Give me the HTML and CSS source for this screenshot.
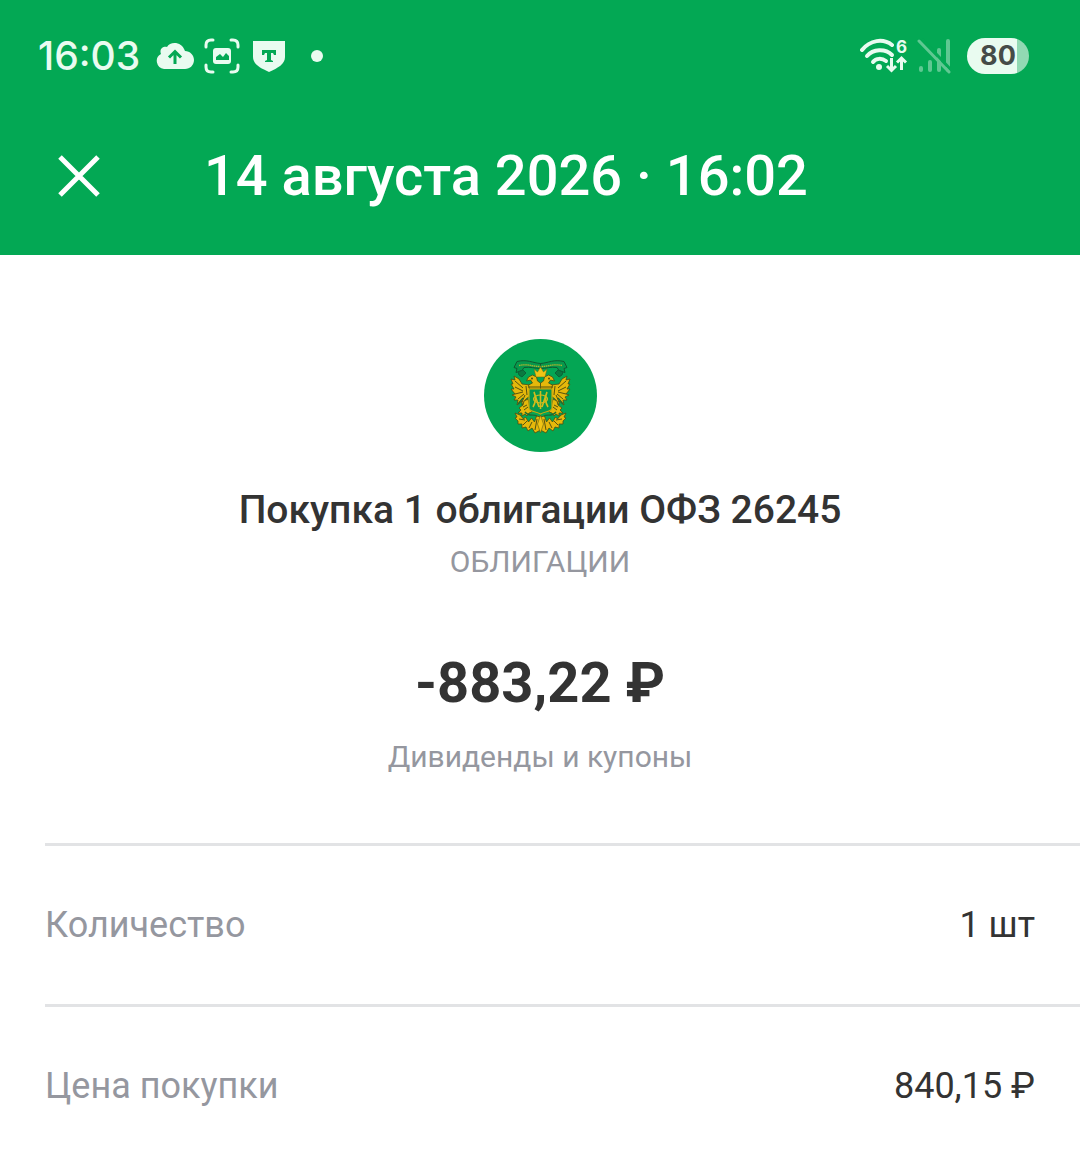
FILE: index.html
```html
<!DOCTYPE html>
<html lang="ru">
<head>
  <meta charset="UTF-8" />
  <meta name="viewport" content="width=device-width, initial-scale=1.0"/>
  <title>Покупка 1 облигации ОФЗ 26245</title>
  <link rel="stylesheet" href="styles.css">
</head>
<body>

  <header class="header">
    <!-- Status bar -->
    <div class="status-bar">
      <div class="status-left">
        <span class="clock">16:03</span>
        <svg class="icon-cloud" width="40" height="28" viewBox="0 0 40 28" aria-hidden="true">
          <path fill="#e9fbf0" d="M9 27a8 8 0 0 1-3-15C4 7 8 4 12 5c3-6 15-6 18 4 5 0 9 4 9 9s-4 9-9 9z"/>
          <path fill="none" stroke="#03a854" stroke-width="3" d="M20 22V10M14 15.500l6-6 6 6"/>
        </svg>
        <svg class="icon-capture" width="36" height="36" viewBox="0 0 36 36" aria-hidden="true">
          <path fill="none" stroke="#e9fbf0" stroke-width="3" stroke-linecap="round" d="M2 9V7q0-5 5-5h2M27 2h2q5 0 5 5v2M34 27v2q0 5-5 5h-2M9 34H7q-5 0-5-5v-2"/>
          <rect x="9" y="10" width="18" height="16" rx="3" fill="#e9fbf0"/>
          <path fill="#03a854" d="M12 22v-3l4-3 3 3 3-4 3 3v4z"/>
        </svg>
        <svg class="icon-shield" width="32" height="32" viewBox="0 0 32 32" aria-hidden="true">
          <path fill="#e9fbf0" d="M0 1h32v16c0 7-7 11-16 15C7 28 0 24 0 17z"/>
          <path fill="#03a854" d="M9 10h14v5h-2l-1-2h-2v7l2 1v1h-8v-1l2-1v-7h-2l-1 2H9z"/>
        </svg>
        <span class="dot"></span>
      </div>
      <div class="status-right">
        <svg width="50" height="36" viewBox="0 0 50 36" aria-hidden="true">
          <g fill="none" stroke="#e9fbf0" stroke-width="4" stroke-linecap="round">
            <path d="M3 12C11 2 24 0 33 7"/>
            <path d="M8 18c6-7 18-8 25-1"/>
            <path d="M14 24c3-4 9-4 13-1"/>
          </g>
          <circle cx="20" cy="29" r="3" fill="#e9fbf0"/>
          <path fill="none" stroke="#e9fbf0" stroke-width="3" d="M32.500 20v12M28 28l4.500 4.500L37 28M42.500 32V20M38 24.500l4.500-4.500 4.500 4.500"/>
          <text class="wifi-label" x="37" y="15">6</text>
        </svg>
        <svg class="icon-signal" width="34" height="36" viewBox="0 0 34 36" aria-hidden="true">
          <path fill="none" stroke="#5fc892" stroke-width="4" stroke-linecap="round" d="M4 30v2M13 24v8M22 12v20M31 3v29"/>
          <path fill="none" stroke="#03a854" stroke-width="3" d="M5 1l29 31"/>
          <path fill="none" stroke="#5fc892" stroke-width="3" stroke-linecap="round" d="M2 3l30 31"/>
        </svg>
        <span class="battery">80</span>
      </div>
    </div>

    <!-- Title bar -->
    <div class="title-bar">
      <button class="close" type="button" aria-label="Закрыть">
        <svg width="42" height="42" viewBox="0 0 42 42" aria-hidden="true">
          <path fill="none" stroke="#fff" stroke-width="5" d="M2 2l38 38M40 2L2 40"/>
        </svg>
      </button>
      <h1 class="date">14 августа 2026 · 16:02</h1>
    </div>
  </header>

  <main>
    <section class="summary">
      <svg class="emblem" width="113" height="113" viewBox="0 0 113 113" aria-hidden="true">
        <defs>
          <g id="half">
            <!-- ribbon -->
            <path fill="#07984c" stroke="#10582f" stroke-width="1" d="M56.500 24.500C49 24 43 20 33 22.500l-3 6 3 1-1 4 6-2 2-3c6-1 11 1 16.500 1z"/>
            <path fill="#0a7a40" stroke="#0b6337" stroke-width="1" d="M34 33l5-2 3 3-4 4-3-2z"/>
            <path fill="none" stroke="#b9b52c" stroke-width="1.300" stroke-dasharray="1.500 .6" d="M35 26.500c8-2 13 1 21.500 1"/>
            <g fill="#e5b80b" stroke="#4d4e12" stroke-width=".8" stroke-linejoin="round">
              <!-- wing -->
              <path d="M46 51V46l-8-1-3-5-5-3 1 4-4-1 2 5-2 0 3 5-3 0 4 5-3 1 4 2-2 3 4 0-1 5 5-4 0 4 4-6 4-3z"/>
              <!-- head -->
              <path d="M56.500 50V44l-3-2-1-4-4-2-4 2-2 4 4-1 2 3-4 2 1 4z"/>
              <!-- leg -->
              <path d="M44 60l-4 2-1 4-4 3 2 2-3 3 4 0 0 3 3-2 2 2 2-3 3-1-2-4z"/>
              <!-- tail -->
              <path d="M36 76l-5-2 2 4-2 1 3 3 0 3 4 0 0 4 4-1 2 4 4-3 3 5 5.500-3V78l-4-1-2 6-3-4-3 4-3-5-2 2z"/>
            </g>
            <path fill="none" stroke="#57520f" stroke-width="1" d="M31 42l8 7M31 48l8 4M31 55l8-2M34 60l6-5M38 63l3-7M42 47l1 9M35 80l6 1M39 86l4-4M45 89l3-6M51 91l2-11M44 48h12M39 68l4-2M40 71l4-3"/>
            <path fill="none" stroke="#1b6a33" stroke-width="1.400" d="M41 73c4 5 9 2 12 4M34 65l5-6"/>
            <circle cx="48" cy="39.500" r=".9" fill="#40420f"/>
          </g>
        </defs>
        <circle cx="56.500" cy="56.500" r="56.500" fill="#04a654"/>
        <use href="#half"/>
        <use href="#half" transform="translate(113 0) scale(-1 1)"/>
        <!-- crown -->
        <path fill="#f0c414" stroke="#6d6713" stroke-width=".5" d="M52 38l-2-8 3.500 3 3-5 3 5 3.500-3-2 8z"/>
        <!-- shield -->
        <path fill="#04984d" stroke="#cba90f" stroke-width="1.200" d="M45 50h23v19c0 4-7 3-11.500 6-4.500-3-11.500-2-11.500-6z"/>
        <path fill="none" stroke="#d4bc1b" stroke-width="1.600" d="M50 53l5 15M63 53l-5 15M50 53c2 5 2 10-1 15M63 53c-2 5-2 10 1 15M56.500 52v18"/>
        <ellipse cx="56.500" cy="60" rx="7" ry="4" fill="none" stroke="#d4bc1b" stroke-width="1.200"/>
        <path fill="#f0c414" stroke="#5d5a12" stroke-width=".6" d="M56.500 76l3 9-3 9-3-9z"/>
      </svg>
      <h2 class="name">Покупка 1 облигации ОФЗ 26245</h2>
      <p class="kind">ОБЛИГАЦИИ</p>
      <p class="amount">-883,22 ₽</p>
      <p class="note">Дивиденды и купоны</p>
    </section>

    <!-- Details -->
    <dl class="details">
      <div class="row">
        <dt>Количество</dt>
        <dd>1 шт</dd>
      </div>
      <div class="row">
        <dt>Цена покупки</dt>
        <dd>840,15 ₽</dd>
      </div>
    </dl>
  </main>

</body>
</html>
```
FILE: styles.css
```css
* {
  box-sizing: border-box;
  margin: 0;
  padding: 0;
}

body {
  background: #fff;
  color: #333;
  font-family: Roboto, sans-serif;
}

.header {
  background: #03a854;
  color: #fff;
  padding: 24px 0 29px;
}

.status-bar {
  display: flex;
  justify-content: space-between;
  align-items: center;
  height: 64px;
  padding: 0 51px 0 38px;
}

.status-left,
.status-right {
  display: flex;
  align-items: center;
}

.status-left {
  gap: 13px;
}

.status-right {
  gap: 8px;
}

.icon-cloud {
  margin-right: -4px;
}

.clock {
  color: #e9fbf0;
  font-family: Inter, sans-serif;
  font-size: 39px;
  font-weight: 500;
  line-height: 64px;
  margin-right: 2px;
}

.dot {
  width: 12px;
  height: 12px;
  margin-left: 13px;
  border-radius: 50%;
  background: #e9fbf0;
}

.wifi-label {
  fill: #e9fbf0;
  font-family: Inter, sans-serif;
  font-size: 17px;
  font-weight: 700;
}

.icon-signal {
  margin-right: 8px;
}

.battery {
  width: 62px;
  height: 36px;
  border-radius: 18px;
  background: linear-gradient(to right, #e9fbf0 80%, #91d9b3 80%);
  color: #454b48;
  font-family: Inter, sans-serif;
  font-size: 27px;
  font-weight: 700;
  line-height: 36px;
  text-align: center;
}

.title-bar {
  display: flex;
  align-items: center;
  gap: 104px;
  padding: 38px 58px 0;
}

.close {
  width: 42px;
  height: 42px;
  border: none;
  background: none;
  cursor: pointer;
}

.close svg {
  display: block;
}

.date {
  font-size: 56px;
  font-weight: 500;
  line-height: 100px;
}

.summary {
  display: flex;
  flex-direction: column;
  align-items: center;
  padding: 84px 44px 64px;
  text-align: center;
}

.name {
  margin-top: 32px;
  font-size: 39px;
  font-weight: 500;
  line-height: 52px;
}

.kind,
.note {
  color: #95979f;
  font-size: 30px;
  line-height: 44px;
}

.kind {
  margin-top: 4px;
}

.amount {
  margin-top: 63px;
  font-size: 56px;
  font-weight: 700;
  line-height: 72px;
}

.note {
  margin-top: 16px;
}

.details {
  padding-left: 45px;
}

.row {
  display: flex;
  justify-content: space-between;
  align-items: center;
  border-top: 3px solid #e2e3e5;
  padding: 51px 45px 51px 0;
  font-size: 36px;
  line-height: 56px;
}

.row dt {
  color: #95979f;
}
```
